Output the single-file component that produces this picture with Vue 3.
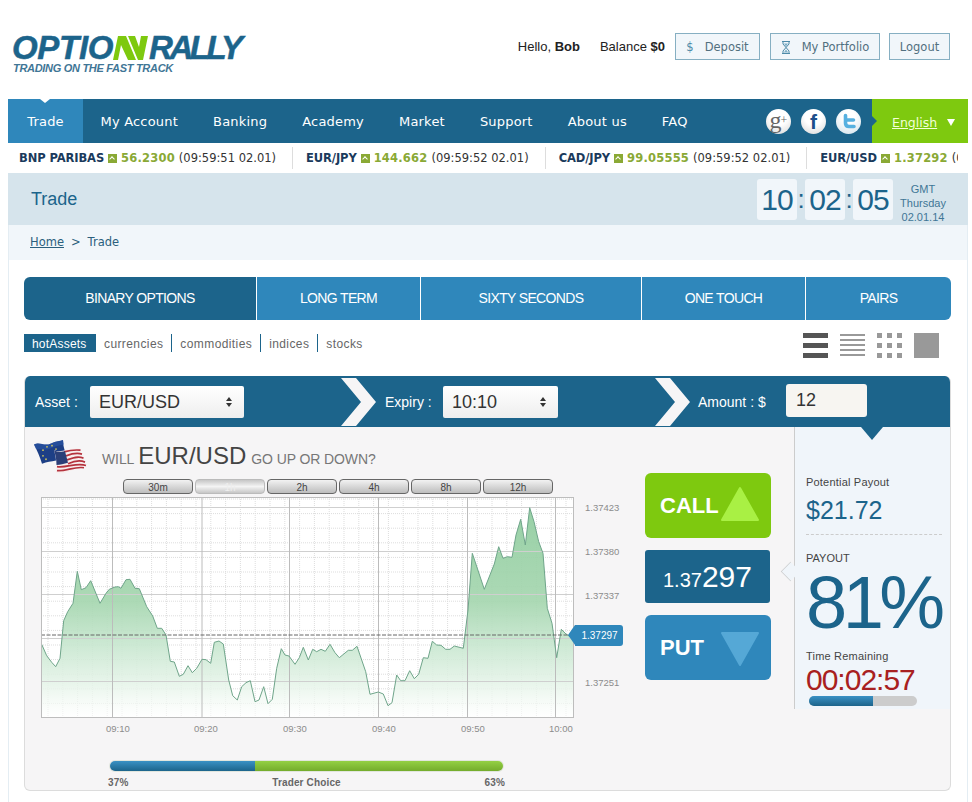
<script setup>
const ticker = [
  { name: 'BNP PARIBAS', value: '56.2300', time: '(09:59:51 02.01)' },
  { name: 'EUR/JPY', value: '144.662', time: '(09:59:52 02.01)' },
  { name: 'CAD/JPY', value: '99.05555', time: '(09:59:52 02.01)' },
  { name: 'EUR/USD', value: '1.37292', time: '(09:59:52 02.01)' }
]
const navItems = ['My Account', 'Banking', 'Academy', 'Market', 'Support', 'About us', 'FAQ']
const tabs = [
  { label: 'BINARY OPTIONS', width: 232 },
  { label: 'LONG TERM', width: 163 },
  { label: 'SIXTY SECONDS', width: 220 },
  { label: 'ONE TOUCH', width: 163 },
  { label: 'PAIRS', width: 145 }
]
const ranges = ['30m', '1h', '2h', '4h', '8h', '12h']

// chart traced from the reference, page coordinates minus chart origin (41, 497)
const raw = [[65,463],[80,497],[95,517],[107,530],[120,505],[131,392],[143,365],[159,340],[172,244],[184,299],[198,293],[212,272],[240,340],[258,310],[268,298],[285,291],[295,290],[303,295],[318,269],[330,268],[345,295],[358,296],[380,350],[398,378],[412,415],[425,415],[438,435],[451,514],[463,516],[478,559],[490,553],[504,527],[517,548],[530,535],[546,508],[558,509],[572,520],[583,457],[597,453],[610,462],[626,570],[638,617],[652,630],[665,590],[678,578],[691,572],[705,635],[717,630],[731,590],[744,641],[757,628],[770,535],[784,476],[795,495],[807,498],[825,523],[838,503],[850,472],[865,510],[878,478],[890,485],[903,478],[916,484],[930,463],[945,488],[958,503],[985,481],[997,481],[1011,469],[1037,545],[1050,613],[1075,606],[1090,612],[1104,647],[1116,638],[1130,555],[1142,572],[1155,572],[1169,542],[1183,566],[1196,553],[1210,503],[1224,505],[1237,454],[1250,465],[1263,466],[1277,478],[1290,478],[1303,468],[1330,475],[1344,360],[1357,190],[1393,298],[1423,222],[1436,170],[1449,205],[1462,200],[1476,202],[1488,135],[1502,88],[1516,165],[1529,53],[1542,95],[1556,155],[1569,190],[1582,355],[1596,400],[1610,503],[1624,418],[1638,432],[1661,447]]
const pts = raw.map(([x, y]) => [(x / 3 + 20 - 41).toFixed(1), (y / 3 + 490 - 497).toFixed(1)])
const line = pts.map(p => p.join(',')).join(' ')
const area = `0,220 ${line} 532,220`

const majorX = [71, 160.5, 248, 337, 426, 514]
const majorY = [10, 54, 97, 141, 184]
const minorX = []
for (let x = 7; x < 532; x += 14.8) minorX.push(x)
const minorY = []
for (let y = 2; y < 220; y += 14.6) minorY.push(y)
const yLabels = [
  { v: '1.37423', y: 11 }, { v: '1.37380', y: 55 }, { v: '1.37337', y: 99 }, { v: '1.37251', y: 186 }
]
const xLabels = [
  { v: '09:10', x: 78 }, { v: '09:20', x: 166 }, { v: '09:30', x: 255 }, { v: '09:40', x: 344 }, { v: '09:50', x: 433 }, { v: '10:00', x: 521 }
]
</script>

<template>
  <div class="page">
    <header class="top">
      <div class="logo">
        <div class="logo-mark">
          <span class="logo-a">OPTIO</span>
          <svg class="logo-n" viewBox="0 0 36 24" width="36" height="24">
            <path d="M0 24L5 0H13L23 24H15L8 9L5 24Z" fill="#7ec90f" />
            <path d="M15 0H22L26 11L28 0H35L30 24H25Z" fill="#7ec90f" />
          </svg>
          <span class="logo-b">RALLY</span>
        </div>
        <div class="tagline">TRADING ON THE FAST TRACK</div>
      </div>
      <div class="account">
        <span>Hello, <b>Bob</b></span>
        <span class="balance">Balance <b>$0</b></span>
        <a class="btn btn-dep"><i class="dollar">$</i>Deposit</a>
        <a class="btn btn-port">
          <svg class="glass" viewBox="0 0 10 13" width="10" height="13">
            <path d="M1 .5H9M1 12.5H9M2 1V3L5 6.5L2 10V12M8 1V3L5 6.5L8 10V12" fill="none" stroke="#4d8aa8" stroke-width="1" />
            <path d="M3 2.5H7L5 5.5ZM2.8 11.5L5 8.5L7.2 11.5Z" fill="#7fb0c8" />
          </svg>
          My Portfolio
        </a>
        <a class="btn btn-out">Logout</a>
      </div>
    </header>

    <nav class="nav">
      <a class="nav-item active">Trade</a>
      <a v-for="n in navItems" :key="n" class="nav-item">{{ n }}</a>
      <div class="social">
        <span class="soc soc-g">g<sup>+</sup></span>
        <span class="soc soc-f">f</span>
        <span class="soc soc-t">
          <svg width="25" height="25" viewBox="0 0 25 25"><path d="M9.5 6.5V14Q9.5 17.5 13 17.5H18M9.5 11H17.5" fill="none" stroke="#56b0e0" stroke-width="3.6" stroke-linecap="round" /></svg>
        </span>
      </div>
      <div class="lang"><u>English</u><i class="lang-arrow"></i></div>
    </nav>

    <div class="ticker">
      <div v-for="t in ticker" :key="t.name" class="tick">
        <b class="tick-name">{{ t.name }}</b>
        <i class="tick-up"></i>
        <b class="tick-val">{{ t.value }}</b>
        <span>{{ t.time }}</span>
      </div>
    </div>

    <div class="title-bar">
      <h1>Trade</h1>
      <div class="clock">
        <span class="digit">10</span><span class="colon">:</span>
        <span class="digit">02</span><span class="colon">:</span>
        <span class="digit">05</span>
        <div class="gmt">GMT<br />Thursday<br />02.01.14</div>
      </div>
    </div>
    <div class="crumbs"><u>Home</u><span class="gt">&gt;</span>Trade</div>

    <main class="main">
      <div class="tabs">
        <a v-for="(t, i) in tabs" :key="t.label" class="tab" :class="{ on: i === 0 }" :style="{ width: t.width + 'px' }">{{ t.label }}</a>
      </div>

      <div class="sub-row">
        <div class="subs">
          <span class="sub chip">hotAssets</span>
          <span class="sub">currencies</span>
          <span class="sub ruled">commodities</span>
          <span class="sub ruled">indices</span>
          <span class="sub ruled">stocks</span>
        </div>
        <div class="views">
          <svg width="25" height="25" viewBox="0 0 25 25"><path d="M0 0H25V5H0ZM0 10H25V15H0ZM0 20H25V25H0Z" fill="#555" /></svg>
          <svg width="25" height="25" viewBox="0 0 25 25"><path d="M0 1H25V3H0ZM0 6H25V8H0ZM0 11H25V13H0ZM0 16H25V18H0ZM0 21H25V23H0Z" fill="#999" /></svg>
          <svg width="25" height="25" viewBox="0 0 25 25"><path d="M0 0H5V5H0ZM10 0H15V5H10ZM20 0H25V5H20ZM0 10H5V15H0ZM10 10H15V15H10ZM20 10H25V15H20ZM0 20H5V25H0ZM10 20H15V25H10ZM20 20H25V25H20Z" fill="#999" /></svg>
          <svg width="25" height="25" viewBox="0 0 25 25"><rect width="25" height="25" fill="#999" /></svg>
        </div>
      </div>

      <section class="panel">
        <div class="panel-head">
          <label class="lbl lbl-asset">Asset :</label>
          <div class="select sel-asset">EUR/USD<i class="updown"></i></div>
          <svg class="chev" width="37" height="48" viewBox="0 0 37 48"><path d="M1 0H16L36 24L16 48H1L21 24Z" fill="#f6f5f6" /></svg>
          <label class="lbl lbl-expiry">Expiry :</label>
          <div class="select sel-exp">10:10<i class="updown"></i></div>
          <svg class="chev chev2" width="37" height="48" viewBox="0 0 37 48"><path d="M1 0H16L36 24L16 48H1L21 24Z" fill="#f6f5f6" /></svg>
          <label class="lbl lbl-amount">Amount : $</label>
          <div class="amount">12</div>
          <i class="head-tip"></i>
        </div>

        <div class="panel-body">
          <div class="left">
            <div class="question">
              <svg class="flag" width="54" height="34" viewBox="0 0 54 30" preserveAspectRatio="none">
                <path d="M0 4C6 1 10 6 17 3C22 1 26 1 29 0C29 6 31 10 33 14C28 15 26 17 22 18C17 19 13 19 8 21C6 15 3 9 0 4Z" fill="#1d3f86" />
                <path d="M0 4C6 1 10 6 17 3C22 1 26 1 29 0L30 4C24 5 20 6 15 8C10 9 6 8 2 8Z" fill="#2c56a8" opacity=".6" />
                <g fill="#e0cf58"><circle cx="13" cy="6" r=".8" /><circle cx="18" cy="5" r=".8" /><circle cx="9" cy="9" r=".8" /><circle cx="22" cy="8" r=".8" /><circle cx="9" cy="14" r=".8" /><circle cx="12" cy="17" r=".8" /></g>
                <path d="M20 9C28 12 36 6 46 8C48 14 50 19 53 24C45 22 30 32 22 29C23 22 22 15 20 9Z" fill="#f7eeee" />
                <g fill="none" stroke="#b5333e" stroke-width="1.5">
                  <path d="M30 10.5C36 9 41 8.5 46.5 9" />
                  <path d="M32 14C38 12 43 11 48 12.5" />
                  <path d="M33 17.5C39 15.5 44 14 49.5 16" />
                  <path d="M34 21C40 18.5 46 17.5 51 19.5" />
                  <path d="M23 23.5C32 25 43 19.5 52 22.5" />
                  <path d="M23 27C31 28 41 23 50 24.5" />
                </g>
                <path d="M20 9C23 10.5 28 10.5 31 10L34 20C30 21 26 22 22.5 22C22.5 17 21.5 13 20 9Z" fill="#2b3f78" />
              </svg>
              <span class="q-small">WILL</span>
              <span class="q-big">EUR/USD</span>
              <span class="q-small">GO UP OR DOWN?</span>
            </div>

            <div class="trade-row">
              <div class="chart-col">
                <div class="ranges">
                  <span v-for="(r, i) in ranges" :key="r" class="range" :class="{ on: i === 1 }">{{ r }}</span>
                </div>
                <div class="chart">
                  <svg class="plot" width="533" height="221" viewBox="0 0 533 221">
                    <defs>
                      <linearGradient id="areaFill" x1="0" y1="0" x2="0" y2="1">
                        <stop offset="0" stop-color="#8fcc9e" stop-opacity=".92" />
                        <stop offset=".45" stop-color="#a5d6af" stop-opacity=".92" />
                        <stop offset=".65" stop-color="#c6e6ce" stop-opacity=".9" />
                        <stop offset=".85" stop-color="#e6f4e9" stop-opacity=".85" />
                        <stop offset="1" stop-color="#ffffff" stop-opacity=".6" />
                      </linearGradient>
                    </defs>
                    <rect width="533" height="221" fill="#fff" />
                    <g stroke="#ddd" stroke-width="1" stroke-dasharray="1 1">
                      <line v-for="x in minorX" :key="x" :x1="x" :x2="x" y1="0" y2="220" />
                      <line v-for="y in minorY" :key="y" :y1="y" :y2="y" x1="0" x2="532" />
                    </g>
                    <polygon :points="area" fill="url(#areaFill)" />
                    <g stroke="#cfcfcf" stroke-width="1">
                      <line v-for="y in majorY" :key="y" :y1="y + .5" :y2="y + .5" x1="0" x2="532" />
                    </g>
                    <g stroke="#bcbcbc" stroke-width="1">
                      <line v-for="x in majorX" :key="x" :x1="x + .5" :x2="x + .5" y1="0" y2="220" />
                    </g>
                    <polyline :points="line" fill="none" stroke="#6fa58a" stroke-width="1" />
                    <line x1="0" x2="532" y1="138" y2="138" stroke="#666" stroke-width="1" stroke-dasharray="4 1.5" />
                    <rect x=".5" y=".5" width="532" height="220" fill="none" stroke="#bdbdbd" />
                  </svg>
                  <span v-for="l in yLabels" :key="l.v" class="y-lab" :style="{ top: l.y + 'px' }">{{ l.v }}</span>
                  <span v-for="l in xLabels" :key="l.v" class="x-lab" :style="{ left: l.x + 'px' }">{{ l.v }}</span>
                  <span class="price-tag">1.37297</span>
                </div>
              </div>

              <div class="actions">
                <a class="act call">CALL
                  <svg class="tri" width="40" height="36" viewBox="0 0 40 36"><path d="M20 2L38 34H2Z" fill="#a9f044" stroke="#a9f044" stroke-width="2" stroke-linejoin="round" /></svg>
                </a>
                <div class="quote">1.37<span>297</span></div>
                <a class="act put">PUT
                  <svg class="tri tri-d" width="40" height="36" viewBox="0 0 40 36"><path d="M2 2H38L20 34Z" fill="#55a8d6" stroke="#55a8d6" stroke-width="2" stroke-linejoin="round" /></svg>
                </a>
              </div>
            </div>

            <div class="choice">
              <div class="choice-bar"><i class="c-blue"></i><i class="c-green"></i></div>
              <div class="choice-lab"><span>37%</span><span>Trader Choice</span><span>63%</span></div>
            </div>
          </div>

          <aside class="payout">
            <i class="notch"></i>
            <div class="p-lab">Potential Payout</div>
            <div class="p-money">$21.72</div>
            <div class="p-dash"></div>
            <div class="p-lab p-up">PAYOUT</div>
            <div class="p-pct">81%</div>
            <div class="p-lab p-time">Time Remaining</div>
            <div class="p-count">00:02:57</div>
            <div class="p-prog"><i></i></div>
          </aside>
        </div>
      </section>
    </main>
  </div>
</template>

<style>
html, body { background: #fff; }
</style>

<style scoped>
.page {
  width: 960px;
  margin-left: 8px;
  height: 802px;
  overflow: hidden;
  font-family: "Liberation Sans", Arial, sans-serif;
  color: #222;
}
.top {
  height: 99px;
  display: flex;
  justify-content: space-between;
  padding: 33px 18px 0 4px;
  box-sizing: border-box;
}
.logo-mark {
  display: flex;
  align-items: center;
  height: 29px;
  font: italic bold 33px/29px "Liberation Sans", sans-serif;
  color: #1c648b;
  -webkit-text-stroke: .5px #1c648b;
}
.logo-a { letter-spacing: -.3px; width: 101px; }
.logo-b { letter-spacing: -3.4px; }
.logo-n { flex: none; }
.tagline {
  font: italic bold 11px/12px "Liberation Sans", sans-serif;
  color: #3f7696;
  margin-left: 1px;
  letter-spacing: -.3px;
}
.account {
  display: flex;
  align-items: flex-start;
  font-size: 13px;
  line-height: 28px;
  color: #222;
}
.balance { margin-left: 20px; }
.btn {
  height: 27px;
  box-sizing: border-box;
  border: 1px solid #86afc2;
  background: #f1f6fa;
  color: #52707f;
  font: 11.5px/25px "DejaVu Sans", sans-serif;
  display: flex;
  align-items: center;
  justify-content: center;
  padding-top: 2px;
}
.btn-dep { width: 85px; margin-left: 10px; }
.btn-port { width: 110px; margin-left: 10px; }
.btn-out { width: 61px; margin-left: 9px; }
.dollar { font-style: normal; color: #4d8aa8; margin-right: 11px; }
.glass { margin-right: 11px; }

.nav {
  height: 44px;
  background: #1c648b;
  display: flex;
  align-items: stretch;
  position: relative;
}
.nav-item {
  color: #fff;
  font: 13px/46px "DejaVu Sans", sans-serif;
  letter-spacing: .2px;
  padding: 0 17.5px;
  white-space: nowrap;
}
.nav-item.active {
  width: 75px;
  padding: 0;
  text-align: center;
  box-sizing: border-box;
  background: #2f87bb;
  position: relative;
}
.nav-item.active::before {
  content: "";
  position: absolute;
  left: 32px;
  top: 0;
  border: 5px solid transparent;
  border-top: 4px solid #fff;
  border-bottom: 0;
}
.social {
  margin-left: auto;
  display: flex;
  align-items: center;
  gap: 10px;
  padding-right: 11px;
}
.soc {
  width: 25px;
  height: 25px;
  border-radius: 50%;
  display: flex;
  align-items: center;
  justify-content: center;
  background: radial-gradient(circle at 50% 30%, #fff 40%, #d5d5d5 100%);
}
.soc-g { font: 24px/20px "Liberation Serif", serif; color: #666; padding-bottom: 3px; box-sizing: border-box; }
.soc-g sup { font-size: 12px; line-height: 0; vertical-align: 7px; margin-left: -1px; }
.soc-f { font: bold 21px/25px "Liberation Sans", sans-serif; color: #1c4f8c; }
.soc-t { background: radial-gradient(circle at 50% 30%, #fff 30%, #cfe0ea 100%); }
.lang {
  width: 96px;
  background: #7ec90f;
  color: #f3ffd8;
  font: 12.5px/47px "DejaVu Sans", sans-serif;
  padding-left: 20px;
  box-sizing: border-box;
  display: flex;
  position: relative;
}
.lang::before {
  content: "";
  position: absolute;
  left: 0;
  top: 17px;
  border: 5px solid transparent;
  border-left-color: #1c648b;
  border-right: 0;
}
.lang-arrow {
  margin: 20px 0 0 10px;
  width: 0;
  height: 0;
  border: 4.5px solid transparent;
  border-top: 7px solid #fff;
  border-bottom: 0;
}
.ticker {
  height: 30px;
  display: flex;
  overflow: hidden;
  align-items: center;
  white-space: nowrap;
  font: 11.5px "DejaVu Sans", sans-serif;
  padding-left: 11px;
  width: 950px;
  box-sizing: border-box;
  color: #333;
}
.tick {
  display: flex;
  align-items: center;
  gap: 4px;
  padding-right: 16px;
  margin-right: 13px;
  border-right: 1px solid #ddd;
  height: 22px;
  flex: none;
}
.tick:last-child { border: 0; }
.tick-name { color: #1a3a5c; letter-spacing: -.1px; }
.tick-val { color: #8aa935; letter-spacing: .2px; }
.tick-up {
  width: 9px;
  height: 9px;
  background: #8aa935;
  position: relative;
  flex: none;
}
.tick-up::after {
  content: "";
  position: absolute;
  left: 2px;
  top: 3px;
  width: 3px;
  height: 3px;
  border-left: 1px solid #fff;
  border-top: 1px solid #fff;
  transform: rotate(45deg);
}

.title-bar {
  height: 52px;
  background: #d6e4ec;
  display: flex;
  justify-content: space-between;
  align-items: center;
  padding: 0 15px 0 23px;
  box-sizing: border-box;
}
.title-bar h1 {
  margin: 0;
  font-size: 18px;
  font-weight: normal;
  color: #1c648b;
}
.clock { display: flex; align-items: center; color: #1c648b; }
.digit {
  width: 40px;
  height: 41px;
  background: #f1f6fa;
  border-radius: 3px;
  text-align: center;
  font-size: 30px;
  line-height: 41px;
  letter-spacing: -1px;
}
.colon { width: 8px; text-align: center; font-size: 26px; line-height: 38px; }
.gmt {
  width: 60px;
  margin-top: 8px;
  text-align: center;
  font-size: 11px;
  line-height: 14px;
  color: #3f7696;
}
.crumbs {
  height: 35px;
  background: #f1f6fa;
  padding-left: 21px;
  color: #2b5f7d;
  font: 11.5px/35px "DejaVu Sans", sans-serif;
  border-right: 1px solid #e4edf3;
  border-left: 1px solid #e4edf3;
  box-sizing: border-box;
}
.gt { margin: 0 7px; }

.main {
  height: 542px;
  box-sizing: border-box;
  padding: 17px 16px 0 16px;
  border-left: 1px solid #e4edf3;
  border-right: 1px solid #e4edf3;
}
.tabs {
  display: flex;
  gap: 1px;
  border-radius: 6px;
  overflow: hidden;
  width: 927px;
  margin-left: -1px;
}
.tab {
  height: 43px;
  background: #2f87bb;
  color: #fff;
  text-align: center;
  font-size: 14px;
  line-height: 43px;
  letter-spacing: -.65px;
  flex: none;
}
.tab.on { background: #1c648b; }
.sub-row {
  display: flex;
  justify-content: space-between;
  margin-left: -1px;
  padding: 14px 12px 0 0;
  height: 56px;
  box-sizing: border-box;
}
.subs { display: flex; align-items: flex-start; }
.sub {
  color: #666;
  font-size: 12px;
  line-height: 20px;
  height: 18px;
  padding: 0 8px;
  letter-spacing: .4px;
}
.sub.ruled { border-left: 1px solid #1c648b; }
.sub.chip { background: #1c648b; color: #fff; letter-spacing: .2px; width: 56px; }
.views { display: flex; gap: 12px; margin-top: -1px; }

.panel {
  width: 927px;
  margin-left: -1px;
  height: 415px;
  box-sizing: border-box;
  border: 1px solid #dcdcdc;
  border-top: 0;
  border-radius: 6px;
  background: #f6f5f6;
  overflow: hidden;
}
.panel-head {
  height: 51px;
  margin: 0 -1px;
  background: #1c648b;
  display: flex;
  align-items: center;
  color: #fff;
  position: relative;
  font-size: 14px;
}
.lbl { white-space: nowrap; }
.lbl-asset { margin-left: 11px; width: 55px; }
.select {
  height: 32px;
  background: linear-gradient(#fff, #eee);
  border-radius: 2px;
  color: #333;
  font-size: 18px;
  line-height: 32px;
  padding-left: 9px;
  box-sizing: border-box;
  position: relative;
}
.sel-asset { width: 154px; }
.sel-exp { width: 115px; }
.updown {
  position: absolute;
  right: 12px;
  top: 11px;
  width: 0;
  height: 0;
  border: 3.5px solid transparent;
  border-bottom: 4px solid #333;
  border-top: 0;
}
.updown::after {
  content: "";
  position: absolute;
  left: -3.5px;
  top: 6px;
  border: 3.5px solid transparent;
  border-top: 4px solid #333;
  border-bottom: 0;
}
.chev { margin-left: 96px; flex: none; }
.lbl-expiry { margin-left: 8px; width: 58px; }
.chev2 { margin-left: 96px; }
.lbl-amount { margin-left: 7px; width: 88px; }
.amount {
  width: 81px;
  height: 33px;
  margin-top: -2px;
  background: #f7f5f1;
  border-radius: 3px;
  color: #333;
  font-size: 18px;
  line-height: 33px;
  padding-left: 10px;
  box-sizing: border-box;
}
.head-tip {
  position: absolute;
  left: 837px;
  top: 51px;
  border: 11px solid transparent;
  border-top: 13px solid #1c648b;
  border-bottom: 0;
  z-index: 2;
}
.panel-body { display: flex; }
.left { width: 769px; flex: none; }
.question {
  display: flex;
  align-items: baseline;
  padding: 12px 0 0 10px;
  height: 40px;
  color: #777;
  font-size: 14px;
  position: relative;
}
.flag { position: absolute; left: 9px; top: 13px; }
.q-small:first-of-type { margin-left: 67px; }
.q-small { line-height: 34px; letter-spacing: -.1px; }
.q-big {
  font-size: 24px;
  color: #444;
  margin: 0 5px 0 4px;
  line-height: 34px;
}
.trade-row { display: flex; }
.chart-col { width: 620px; flex: none; }
.ranges {
  display: flex;
  gap: 2px;
  margin: 0 0 3px 98px;
}
.range {
  width: 68px;
  height: 13px;
  border: 1px solid #666;
  border-radius: 4px;
  background: linear-gradient(#f2f2f2, #bdbdbd);
  text-align: center;
  font-size: 10px;
  line-height: 16px;
  color: #444;
}
.range.on { background: linear-gradient(#c6c6c6, #f4f4f4 50%, #c6c6c6); border-color: #bbb; color: #eee; }
.chart {
  position: relative;
  margin-left: 16px;
  height: 263px;
}
.plot { display: block; }
.y-lab {
  position: absolute;
  left: 544px;
  margin-top: -6px;
  font-size: 9.5px;
  line-height: 12px;
  color: #8c8c8c;
}
.x-lab {
  position: absolute;
  top: 226px;
  margin-left: -13px;
  font-size: 9.5px;
  line-height: 12px;
  color: #8c8c8c;
}
.price-tag {
  position: absolute;
  left: 534px;
  top: 128px;
  width: 48px;
  height: 21px;
  background: #2f87bb;
  border-radius: 0 3px 3px 0;
  color: #fff;
  font-size: 10px;
  line-height: 21px;
  text-align: center;
  padding-left: 1px;
  box-sizing: border-box;
}
.price-tag::before {
  content: "";
  position: absolute;
  left: -7px;
  top: 0;
  border: 10.5px solid transparent;
  border-right: 7px solid #2f87bb;
  border-left: 0;
}
.actions {
  width: 126px;
  display: flex;
  flex-direction: column;
  gap: 12px;
  margin-top: -6px;
}
.act {
  height: 65px;
  border-radius: 6px;
  color: #fff;
  font-size: 22px;
  font-weight: bold;
  display: flex;
  align-items: center;
  padding-left: 15px;
  box-sizing: border-box;
  position: relative;
}
.call { background: #7ec90f; }
.put { background: #2f87bb; }
.tri { position: absolute; left: 75px; top: 13px; }
.tri-d { top: 16px; }
.quote {
  height: 53px;
  width: 125px;
  background: #1c648b;
  border-radius: 3px;
  color: #fff;
  font-size: 20px;
  text-align: center;
  line-height: 53px;
}
.quote span { font-size: 30px; }
.choice { margin-left: 83px; width: 397px; margin-top: 1px; }
.choice-bar {
  height: 10px;
  border-radius: 5px;
  display: flex;
  overflow: hidden;
  box-shadow: 0 0 0 1px #e2e6de;
  margin: 0 2px;
}
.c-blue { width: 145px; background: linear-gradient(#3a91c4, #1c648b); }
.c-green { flex: 1; background: linear-gradient(#94d044, #74ac2c); }
.choice-lab {
  display: flex;
  justify-content: space-between;
  font-size: 10px;
  font-weight: bold;
  color: #666;
  margin-top: 6px;
  line-height: 11px;
  letter-spacing: .15px;
}
.payout {
  width: 157px;
  height: 282px;
  box-sizing: border-box;
  border-left: 1px solid #ccc;
  background: #f0f5fa;
  padding: 49px 0 0 11px;
  position: relative;
}
.notch {
  position: absolute;
  left: -14px;
  top: 135px;
  width: 18px;
  height: 18px;
  background: #f0f5fa;
  border: 1px solid #ccc;
  border-width: 0 0 1px 1px;
  transform: rotate(45deg) scale(.72);
}
.p-lab { font-size: 11px; line-height: 13px; color: #444; letter-spacing: .2px; }
.p-money { font-size: 25px; line-height: 30px; color: #1c648b; margin-top: 6px; }
.p-dash { border-top: 1px dashed #ccc; margin: 9px 8px 0 0; }
.p-up { margin-top: 17px; letter-spacing: 0; }
.p-pct { font-size: 74px; line-height: 72px; color: #1c648b; margin-top: 2px; letter-spacing: -4.5px; white-space: nowrap; }
.p-time { margin-top: 11px; }
.p-count { font-size: 30px; line-height: 30px; color: #a82020; margin-top: 2px; letter-spacing: -1px; }
.p-prog {
  width: 108px;
  height: 10px;
  margin: 1px 0 0 3px;
  border-radius: 5px;
  background: #ccc;
  overflow: hidden;
}
.p-prog i { display: block; width: 64px; height: 10px; background: linear-gradient(#3a91c4, #1c648b); }
</style>
